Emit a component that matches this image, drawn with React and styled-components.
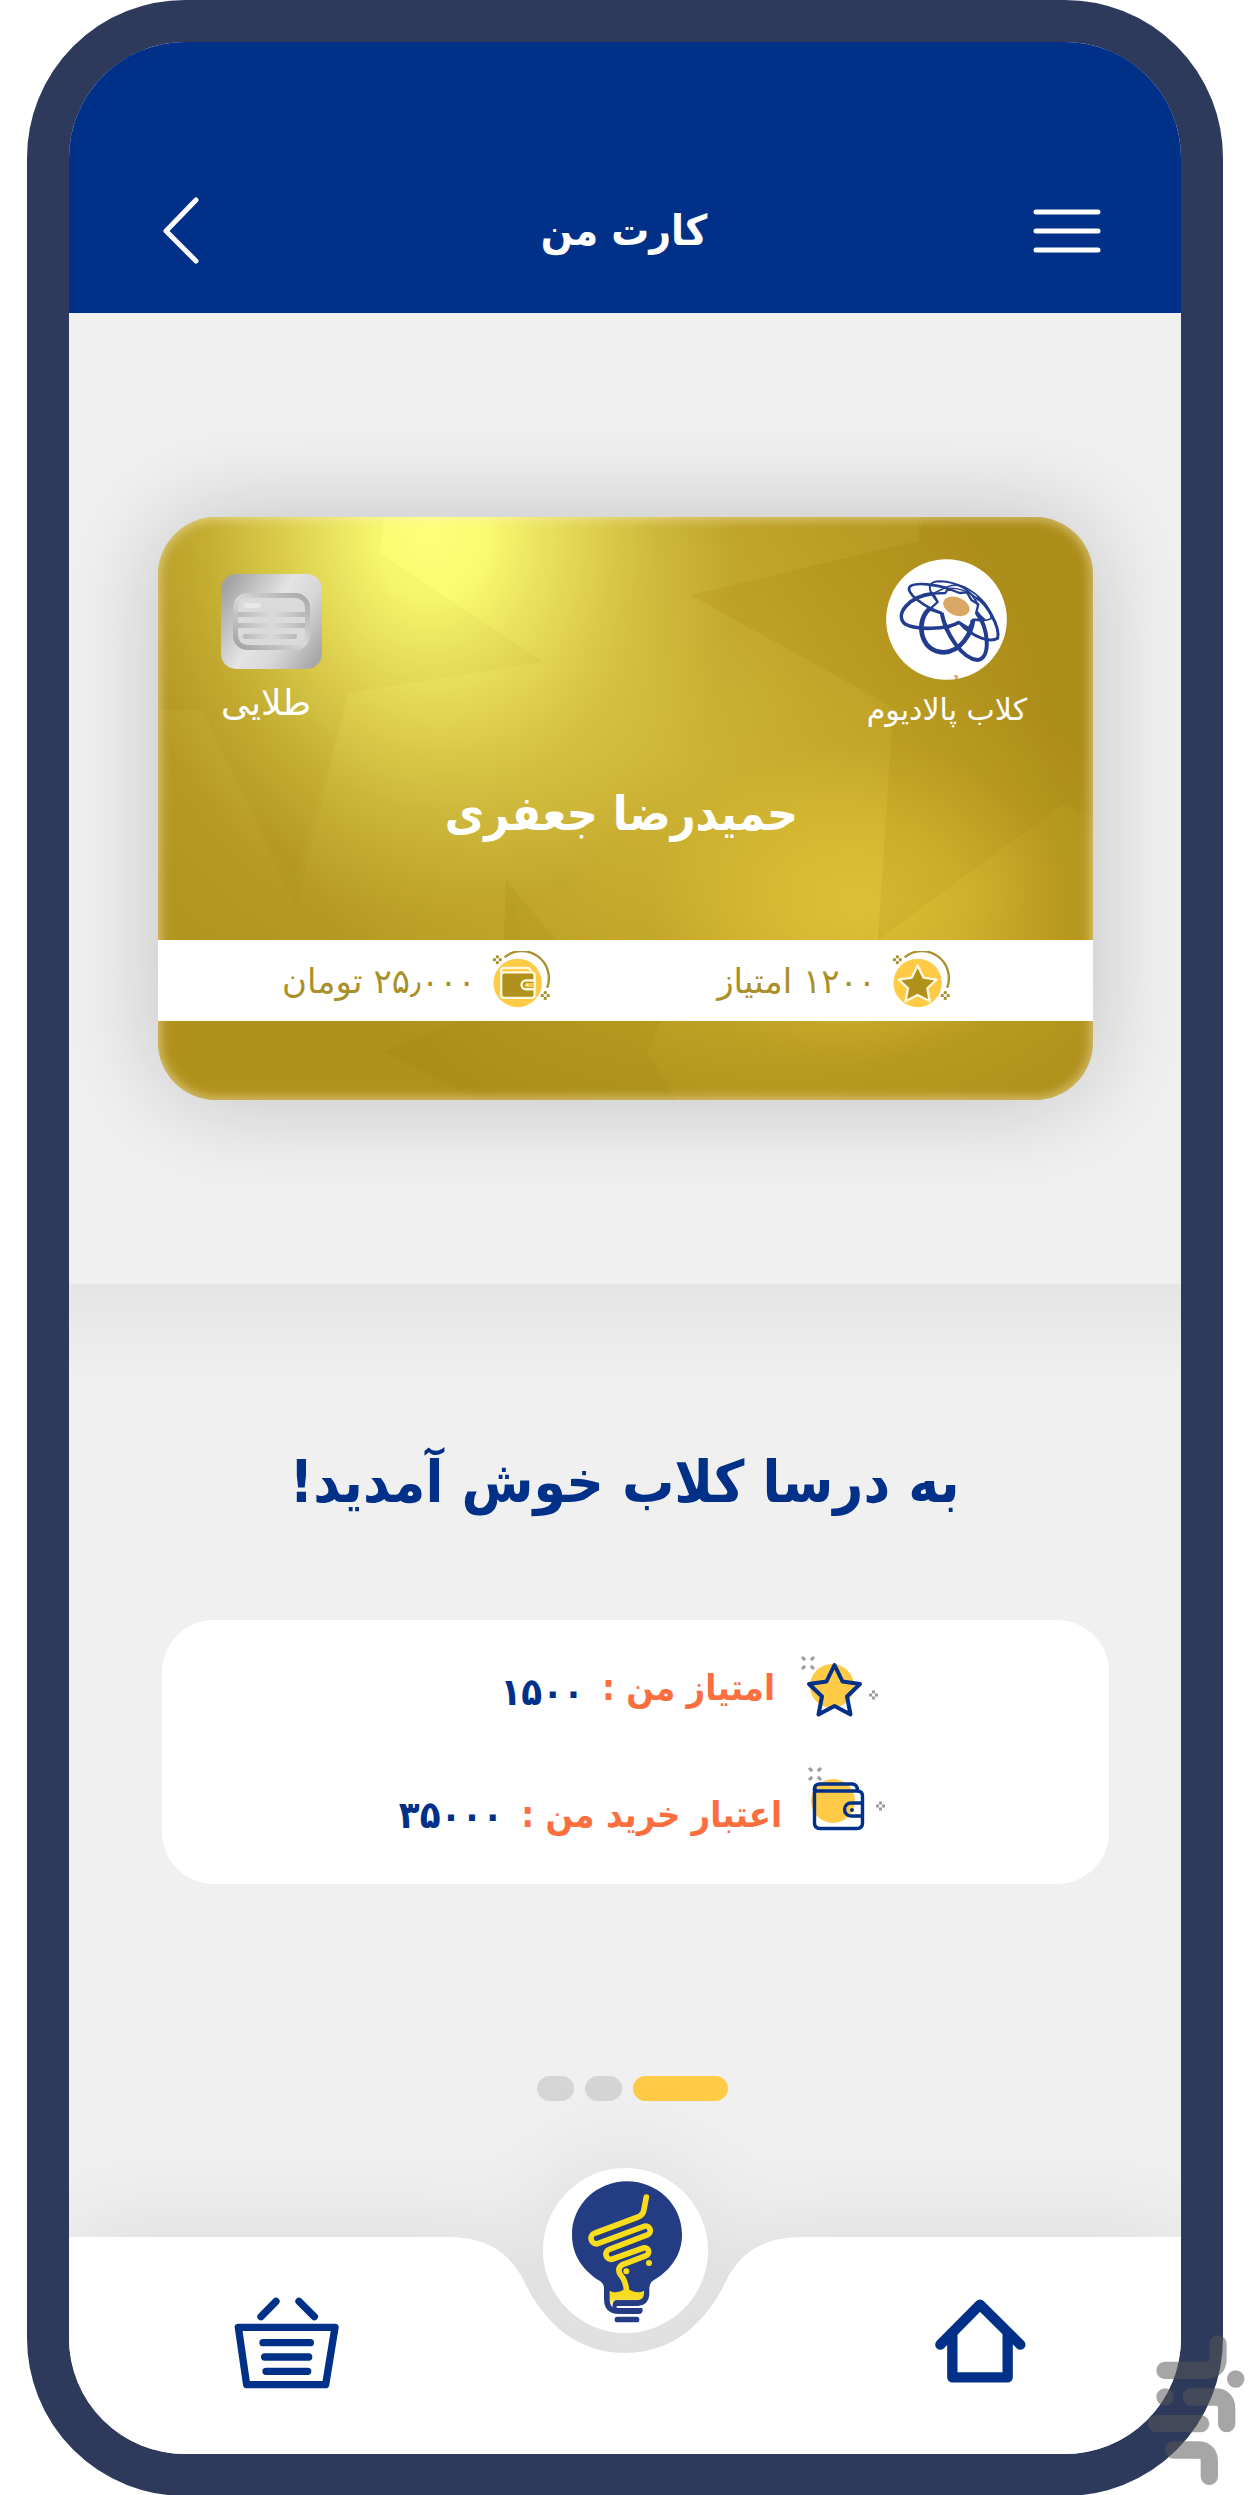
import React from "react";
import styled, { createGlobalStyle } from "styled-components";

const navy = "#003087";
const gold = "#b0911c";
const amber = "#ffcb47";
const condensed = `"DejaVu Sans Condensed", "DejaVu Sans", sans-serif`;

const GlobalStyle = createGlobalStyle`
  * { box-sizing: border-box; }
  body {
    margin: 0;
    background: #fff;
    font-family: "DejaVu Sans", "Noto Sans", sans-serif;
  }
  button { border: 0; padding: 0; background: none; cursor: pointer; }
  svg { display: block; }
  h1, h2, p, dl, dt, dd { margin: 0; }
`;

const Stage = styled.div`
  position: relative;
  padding: 0 28px 0 27px;
`;

const Phone = styled.main`
  border: 42px solid #2d3a5c;
  border-radius: 158px;
  overflow: hidden;
  background: #f0f0f0;
  display: flex;
  flex-direction: column;
`;

const Header = styled.header`
  height: 271px;
  padding: 107px 79px 0 89px;
  background: ${navy};
  display: grid;
  grid-template-columns: 60px 1fr 72px;
  align-items: center;
`;

const HeaderButton = styled.button`
  justify-self: ${(p) => p.$side};
`;

const Title = styled.h1`
  color: #fff;
  font-family: ${condensed};
  font-size: 42px;
  line-height: 64px;
  font-weight: 700;
  text-align: center;
`;

const CardSection = styled.section`
  padding: 204px 88px 184px 89px;
`;

const Card = styled.article`
  position: relative;
  overflow: hidden;
  border-radius: 58px;
  height: 583px;
  display: flex;
  flex-direction: column;
  background:
    radial-gradient(ellipse 300px 230px at 75% 66%, rgba(223, 192, 53, 0.95) 0%, rgba(218, 186, 48, 0.75) 35%, rgba(200, 170, 40, 0.3) 70%, rgba(176, 145, 28, 0) 100%),
    radial-gradient(ellipse 400px 500px at 29% 2%, #ffff78 0%, #fbfb70 14%, rgba(240, 234, 98, 0.82) 32%, rgba(222, 208, 78, 0.5) 56%, rgba(200, 175, 55, 0.2) 78%, rgba(176, 145, 28, 0) 100%),
    radial-gradient(ellipse 380px 380px at 55% 42%, rgba(212, 188, 56, 0.85) 0%, rgba(205, 178, 48, 0.55) 45%, rgba(176, 145, 28, 0) 100%),
    ${gold};
`;

const CardShadow = styled.div`
  border-radius: 58px;
  box-shadow: 0 0 100px rgba(0, 0, 0, 0.2);
`;

const Facets = styled.svg`
  position: absolute;
  inset: 0;
  width: 100%;
  height: 100%;
`;

const Glow = styled.div`
  position: absolute;
  inset: 0;
  border-radius: 58px;
  box-shadow: inset 0 0 12px 2px rgba(255, 240, 200, 0.55);
`;

const CardTop = styled.div`
  position: relative;
  padding: 42px 66px 0 63px;
  height: 230px;
  display: flex;
  justify-content: space-between;
  align-items: flex-start;
  color: #fff;
`;

const Badge = styled.div`
  display: flex;
  flex-direction: column;
  align-items: ${(p) => p.$align};
  padding-top: ${(p) => p.$top}px;
  gap: ${(p) => p.$gap}px;
`;

const BadgeText = styled.p`
  font-size: ${(p) => p.$size}px;
  line-height: 44px;
`;

const Holder = styled.h2`
  position: relative;
  height: 193px;
  padding: 26px 8px 0 0;
  color: #fff;
  font-family: ${condensed};
  font-size: 48px;
  line-height: 80px;
  font-weight: 700;
  text-align: center;
`;

const Stripe = styled.div`
  position: relative;
  height: 81px;
  background: #fff;
  color: #aa8f2a;
  display: flex;
  align-items: center;
  padding: 0 141px 0 124px;
  justify-content: space-between;
`;

const Stat = styled.p`
  display: flex;
  align-items: center;
  gap: 16px;
  font-size: 34px;
  line-height: 60px;
`;

const Welcome = styled.section`
  display: flex;
  flex-direction: column;
  background: linear-gradient(#e5e5e5, #f0f0f0 100px);
  padding: 150px 72px 136px 93px;
`;

const Greeting = styled.h2`
  height: 186px;
  padding-right: 22px;
  color: ${navy};
  font-family: ${condensed};
  font-size: 58px;
  line-height: 96px;
  font-weight: 700;
  text-align: center;
`;

const Panel = styled.dl`
  height: 264px;
  border-radius: 52px;
  background: #fff;
  padding: 35px 221px 0 0;
  display: flex;
  flex-direction: column;
  gap: 45px;
  font-family: ${condensed};
  font-weight: 700;
  line-height: 66px;
`;

const Row = styled.div`
  display: flex;
  height: 66px;
  padding-right: ${(p) => p.$indent}px;
`;

const Label = styled.dt`
  margin: 0 24px 0 18px;
  padding-top: ${(p) => p.$top}px;
  color: #fb6e3e;
  font-size: 36px;
`;

const Value = styled.dd`
  padding-top: ${(p) => p.$top}px;
  color: ${navy};
  font-size: 38px;
`;

const Pager = styled.div`
  display: flex;
  justify-content: center;
  gap: 11px;
  padding: 192px 6px 0 0;
`;

const Dot = styled.button`
  width: ${(p) => (p.$active ? 95 : 37)}px;
  height: 25px;
  border-radius: 13px;
  background: ${(p) => (p.$active ? amber : "#d5d5d5")};
`;

const Nav = styled.nav`
  height: 217px;
  display: grid;
  grid-template-columns: minmax(0, 1fr) 362px minmax(0, 1fr);
  filter: drop-shadow(0 -8px 48px rgba(0, 0, 0, 0.08));
`;

const NavSide = styled.div`
  background: #fff;
  display: flex;
  align-items: flex-start;
  justify-content: ${(p) => (p.$end ? "flex-end" : "flex-start")};
  padding: ${(p) => (p.$end ? "62px 155px 0 0" : "60px 0 0 165px")};
`;

const Notch = styled.div`
  position: relative;
  margin: 0 -2px;
  display: flex;
  justify-content: center;
`;

const NotchShape = styled.svg`
  position: absolute;
  inset: 0;
`;

const Bulb = styled.button`
  position: relative;
  width: 165px;
  height: 165px;
  margin-top: -69px;
  border-radius: 50%;
  background: #fff;
`;

const Mark = styled.svg`
  position: absolute;
  right: 4px;
  bottom: 9px;
`;

function Sparks({ x, y, color }) {
  return (
    <g stroke={color} strokeWidth="3" strokeDasharray="4.500 8 4.500 20">
      <path d={`M${x - 6} ${y - 6} l12 12`} />
      <path d={`M${x + 6} ${y - 6} l-12 12`} />
    </g>
  );
}

function Diamond({ x, y, color }) {
  return (
    <g fill={color}>
      <rect x={x - 1.5} y={y - 4.5} width="3" height="3" />
      <rect x={x - 1.5} y={y + 1.5} width="3" height="3" />
      <rect x={x - 4.5} y={y - 1.5} width="3" height="3" />
      <rect x={x + 1.5} y={y - 1.5} width="3" height="3" />
    </g>
  );
}

function CoinBase() {
  return (
    <>
      <circle cx="25.500" cy="33" r="25" fill={amber} />
      <path d="M12 6.500 A28 28 0 0 1 56 38" fill="none" stroke="#aa8f2a" strokeWidth="2.400" />
      <Diamond x={4.5} y={9} color="#aa8f2a" />
      <Diamond x={54} y={46} color="#aa8f2a" />
    </>
  );
}

function StarCoin() {
  return (
    <svg width="60" height="60" viewBox="0 0 60 62">
      <CoinBase />
      <path d="M25.500 15 L31.500 27.500 L45 29.500 L35.500 38.500 L38 52 L25.500 45.500 L13 52 L15.500 38.500 L6 29.500 L19.500 27.500 Z"
        fill={gold} stroke="#fff8dc" strokeWidth="2.400" strokeLinejoin="round" />
    </svg>
  );
}

function WalletCoin() {
  return (
    <svg width="60" height="60" viewBox="0 0 60 62">
      <CoinBase />
      <g stroke="#fff8dc" strokeWidth="2.400" strokeLinejoin="round">
        <path d="M8.500 23 V20 Q8.500 17.500 11 17.500 H36 Q38.500 17.500 39 21" fill="none" />
        <rect x="8.500" y="22" width="34.500" height="26.500" rx="3" fill={gold} />
        <path d="M43 30.500 H34 A4.500 4.500 0 0 0 34 39.500 H43 Z" fill={gold} />
      </g>
      <path d="M42 33 H35 A2.200 2.200 0 0 0 35 37.500 H42 Z" fill={amber} />
      <circle cx="35.500" cy="35" r="1.200" fill="#fff" />
    </svg>
  );
}

function StarIcon() {
  return (
    <svg width="82" height="66" viewBox="0 0 82 66">
      <circle cx="33" cy="31" r="22" fill={amber} />
      <path d="M35.500 10 L43.500 26.500 L61 29 L48 41.500 L51.500 59.500 L35.500 51 L19.500 59.500 L23 41.500 L10 29 L27.500 26.500 Z"
        fill="none" stroke={navy} strokeWidth="4" strokeLinejoin="round" />
      <Sparks x={9} y={8} color="#9c9c9c" />
      <Diamond x={74.5} y={40} color="#9c9c9c" />
    </svg>
  );
}

function WalletIcon() {
  return (
    <svg width="82" height="66" viewBox="0 0 82 66">
      <circle cx="27" cy="35" r="22" fill={amber} />
      <path d="M8.500 24 V23 Q8.500 18 14 18 H46 Q51 18 51.500 24" fill="none" stroke={navy} strokeWidth="3.400" />
      <path d="M8.500 22 Q9 25 12 25 H51 Q56.500 25 56.500 30 V57 Q56.500 62.500 51 62.500 H14 Q8.500 62.500 8.500 57 Z"
        fill="none" stroke={navy} strokeWidth="3.400" />
      <path d="M56.500 37 H45 A6.500 6.500 0 0 0 45 50 H56.500" fill="none" stroke={navy} strokeWidth="3.400" />
      <circle cx="46" cy="44" r="2" fill={navy} />
      <Sparks x={9} y={8} color="#9c9c9c" />
      <Diamond x={74.5} y={40} color="#9c9c9c" />
    </svg>
  );
}

function ClubLogo() {
  return (
    <svg width="121" height="121" viewBox="27 26 363 363">
      <circle cx="208.500" cy="207.500" r="181" fill="#fff" />
      <g fill="none" stroke="#223d8f" strokeLinejoin="round">
        <path strokeWidth="14" d="M160 174 C115 205 125 305 200 306 C250 305 284 250 288 208" />
        <path strokeWidth="12" d="M194 188 C206 250 255 326 302 329 C342 324 336 235 298 186" />
        <path strokeWidth="11" d="M168 130 C95 138 52 192 84 221 C118 240 210 238 248 215" />
        <path strokeWidth="8" d="M194 188 C140 170 82 125 99 108 C118 94 180 104 212 114" />
        <path strokeWidth="6" d="M182 155 C144 112 155 93 190 93 C240 95 285 118 303 165" />
        <path strokeWidth="5" d="M166 130 C195 120 225 92 262 110 C310 135 345 175 342 205 C320 215 300 210 286 209" />
        <path strokeWidth="9" d="M246 216 C290 266 343 276 362 264 C370 230 330 160 298 142" />
        <path strokeWidth="4" d="M212 114 C260 108 322 150 345 192" />
        <path strokeWidth="7" d="M182 155 L168 130 L205 128 L213 115 L248 128 L270 126 L284 150 L304 162 L298 186 L322 208 L288 208 L276 234 L246 216 L206 236 L195 190 L158 177 Z" />
      </g>
      <ellipse cx="238" cy="168" rx="41" ry="27" transform="rotate(22 238 168)" fill="#dba765" />
      <path d="M230 373 l12 2 l2 11 l-8 1 Z" fill="#dba765" />
    </svg>
  );
}

function Chip() {
  return (
    <svg width="101" height="95" viewBox="0 0 101 95">
      <defs>
        <linearGradient id="steel" x1="0" y1="0.200" x2="1" y2="0.800">
          <stop offset="0" stopColor="#a3a3a3" />
          <stop offset="0.450" stopColor="#e4e4e4" />
          <stop offset="0.700" stopColor="#d6d6d6" />
          <stop offset="1" stopColor="#a8a8a8" />
        </linearGradient>
        <linearGradient id="ring" x1="0" y1="1" x2="1" y2="0">
          <stop offset="0" stopColor="#a2a2a2" />
          <stop offset="0.500" stopColor="#d8d8d8" />
          <stop offset="1" stopColor="#a8a8a8" />
        </linearGradient>
        <linearGradient id="bars" x1="0" y1="0" x2="1" y2="0">
          <stop offset="0" stopColor="#b8b8b8" />
          <stop offset="0.500" stopColor="#dadada" />
          <stop offset="1" stopColor="#b8b8b8" />
        </linearGradient>
      </defs>
      <rect width="101" height="95" rx="15" fill="url(#steel)" />
      <rect x="14.500" y="21.500" width="72" height="52" rx="12" fill="#dadada" stroke="url(#ring)" strokeWidth="5" />
      <rect x="17" y="38" width="67" height="5" fill="url(#bars)" />
      <rect x="17" y="49" width="67" height="5" fill="url(#bars)" />
      <rect x="23" y="29" width="17" height="5" rx="2.500" fill="#e8e8e8" />
      <rect x="22" y="60" width="54" height="5" rx="2.500" fill="url(#bars)" />
    </svg>
  );
}

function BulbIcon() {
  return (
    <svg width="165" height="165" viewBox="183 350 495 495">
      <defs>
        <linearGradient id="pool" x1="0" y1="0" x2="0" y2="1">
          <stop offset="0" stopColor="#f7d915" />
          <stop offset="0.500" stopColor="#f7dd30" />
          <stop offset="1" stopColor="#ffffff" />
        </linearGradient>
      </defs>
      <path fill="#233c83" d="M435 390 C526 390 600 461 600 550 C600 610 567 655 515 687 Q503 694 502 710 V730 Q500 762 466 764 H470 A12 12 0 0 1 470 788 H410 Q367 786 366 745 V712 Q366 698 355 690 C300 655 270 610 270 550 C270 461 344 390 435 390 Z" />
      <path fill="url(#pool)" d="M383 718 Q400 728 424 716 H444 Q468 728 486 718 V728 Q484 746 466 747 H404 Q390 750 392 768 Q383 760 383 745 Z" />
      <path d="M404 767 H480" stroke="#fff" strokeWidth="6" />
      <rect x="395" y="747" width="80" height="16" rx="8" fill="#233c83" />
      <rect x="398" y="796" width="74" height="17" rx="8" fill="#233c83" />
      <path fill="none" stroke="#f9dc1b" strokeWidth="17" strokeLinecap="round" strokeLinejoin="round"
        d="M493 437 L486 474 Q484 490 468 497 L340 545 A16 16 0 0 0 347 577 L484 526 A13 13 0 0 1 498 550 L382 594 A14 14 0 0 0 392 623 L484 590 A12 12 0 0 1 492 613 L432 636 Q402 645 414 668 Q433 690 434 722" />
      <circle cx="501" cy="635" r="9" fill="#f9dc1b" />
      <circle cx="433" cy="660" r="9" fill="#f9dc1b" />
    </svg>
  );
}

function BasketIcon() {
  return (
    <svg width="105" height="92" viewBox="101 111 315 276">
      <g fill="none" stroke={navy} strokeWidth="22" strokeLinecap="round" strokeLinejoin="round">
        <path d="M114 202 H404 L376 374 H139 Z" />
        <path d="M182 170 L227 124 M296 124 L342 170" />
        <path d="M188 248 H330 M193 291 H325 M197 334 H322" />
      </g>
    </svg>
  );
}

function HomeIcon() {
  return (
    <svg width="91" height="84" viewBox="104 118 273 252">
      <g fill="none" stroke={navy} strokeWidth="31" strokeLinecap="round" strokeLinejoin="round">
        <path d="M120 255 L239 135 L360 255" />
        <path d="M156 225 V353 H322 V225" />
      </g>
    </svg>
  );
}

export default function App() {
  return (
    <>
      <GlobalStyle />
      <Stage>
        <Phone>
          <Header>
            <HeaderButton $side="start" aria-label="بازگشت">
              <svg width="44" height="72" viewBox="0 0 44 72" fill="none" stroke="#fff" strokeWidth="5" strokeLinecap="round" strokeLinejoin="round">
                <path d="M38 5 L8 36 L38 66" />
              </svg>
            </HeaderButton>
            <Title dir="rtl">کارت من</Title>
            <HeaderButton $side="end" aria-label="منو">
              <svg width="69" height="46" viewBox="0 0 69 46" stroke="#fff" strokeWidth="5" strokeLinecap="round">
                <path d="M3 4 H65 M3 23 H65 M3 42 H65" />
              </svg>
            </HeaderButton>
          </Header>

          <CardSection>
            <CardShadow>
              <Card dir="rtl">
                <Facets viewBox="0 0 935 583" preserveAspectRatio="none">
                  <path d="M222 36 L385 145 L190 176 L138 392 L44 193 H0 V0 H226 Z" fill="#8a7000" opacity="0.040" />
                  <path d="M222 36 L226 0 H760 V24 L532 78 L700 170 L735 208 L720 423 H365 L348 363 L346 423 H0 V193 H44 L115 335 L138 360 L190 176 L385 145 Z" fill="#fff6a0" opacity="0.030" />
                  <path d="M765 0 L760 24 L532 78 L735 190 L720 423 L905 287 L935 300 V0 Z" fill="#8a6c00" opacity="0.080" />
                  <path d="M348 363 L346 423 H398 Z M224 535 L305 502 H505 L489 535 L518 583 H320 Z" fill="#8a6c00" opacity="0.090" />
                </Facets>
                <Glow />
                <CardTop>
                  <Badge $align="center" $top={0} $gap={8}>
                    <ClubLogo />
                    <BadgeText $size={30}>کلاب پالادیوم</BadgeText>
                  </Badge>
                  <Badge $align="flex-end" $top={15} $gap={12}>
                    <Chip />
                    <BadgeText $size={36}>طلایی</BadgeText>
                  </Badge>
                </CardTop>
                <Holder>حمیدرضا جعفری</Holder>
                <Stripe>
                  <Stat>
                    <StarCoin />
                    <span>۱۲۰۰ امتیاز</span>
                  </Stat>
                  <Stat>
                    <WalletCoin />
                    <span>۲۵٫۰۰۰ تومان</span>
                  </Stat>
                </Stripe>
              </Card>
            </CardShadow>
          </CardSection>

          <Welcome dir="rtl">
            <Greeting>به درسا کلاب خوش آمدید!</Greeting>
            <Panel>
              <Row $indent={7}>
                <StarIcon />
                <Label $top={0}>امتیاز من :</Label>
                <Value $top={4}>۱۵۰۰</Value>
              </Row>
              <Row $indent={0}>
                <WalletIcon />
                <Label $top={16}>اعتبار خرید من :</Label>
                <Value $top={16}>۳۵۰۰۰</Value>
              </Row>
            </Panel>
            <Pager>
              <Dot $active aria-label="صفحه ۱" />
              <Dot aria-label="صفحه ۲" />
              <Dot aria-label="صفحه ۳" />
            </Pager>
          </Welcome>

          <Nav>
            <NavSide>
              <button aria-label="سبد خرید"><BasketIcon /></button>
            </NavSide>
            <Notch>
              <NotchShape width="366" height="217" viewBox="0 0 366 217">
                <path d="M0 0 H2 C32 0 62 5 82 44 C100 82 132 116 183 116 C234 116 266 82 284 44 C304 5 334 0 364 0 H366 V217 H0 Z" fill="#fff" />
              </NotchShape>
              <Bulb aria-label="کلاب"><BulbIcon /></Bulb>
            </Notch>
            <NavSide $end>
              <button aria-label="خانه"><HomeIcon /></button>
            </NavSide>
          </Nav>
        </Phone>
        <Mark width="100" height="153" viewBox="740 221 300 459" aria-hidden="true">
          <g opacity="0.530" fill="none" stroke="#585858" strokeWidth="52" strokeLinecap="round">
            <path d="M794 330 H918 Q953 330 953 295 V251" />
            <path d="M873 410 H944 Q979 410 979 445 V490" />
            <path d="M769 490 H901" />
            <path d="M820 569 H892 Q927 569 927 604 V648" />
            <path d="M794 410 h0.100 M1006 356 h0.100" />
          </g>
        </Mark>
      </Stage>
    </>
  );
}
